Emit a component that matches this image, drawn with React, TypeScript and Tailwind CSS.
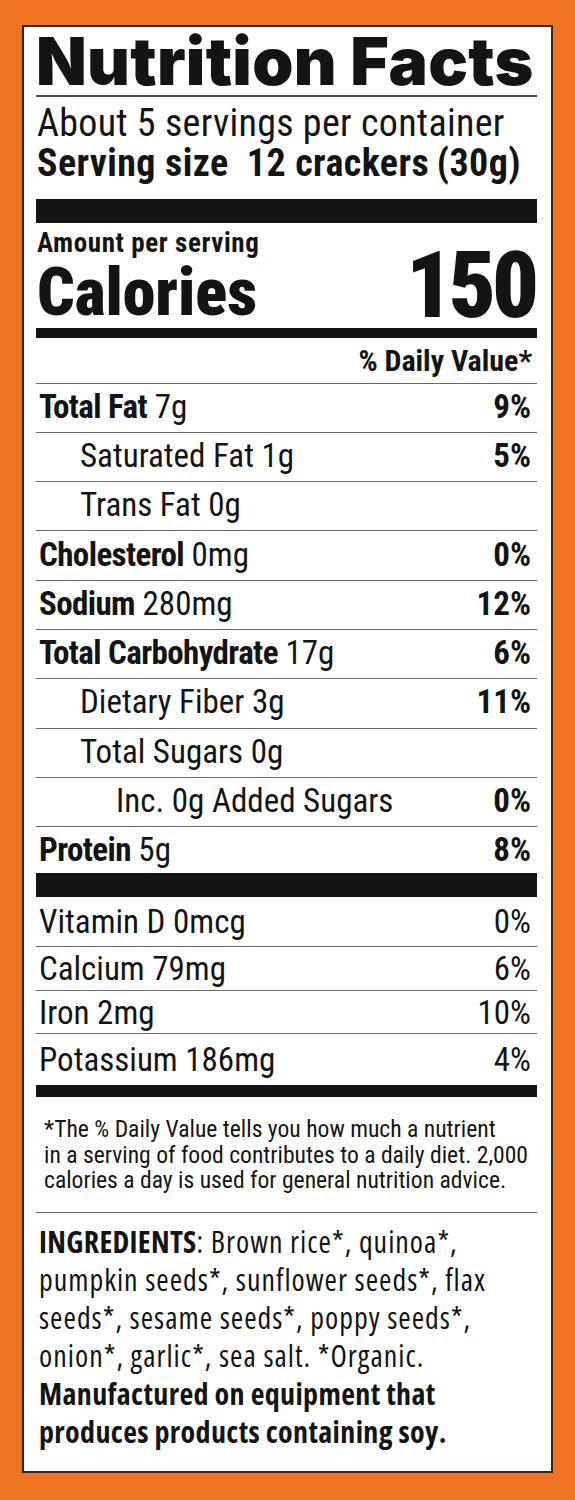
import React from "react";

type Row = {
  label: string;
  amount?: string;
  dv?: string;
  bold?: boolean;
  indent?: 0 | 1 | 2;
  dvBold?: boolean;
};

const rows: Row[] = [
  { label: "Total Fat", amount: "7g", dv: "9%", bold: true, dvBold: true },
  { label: "Saturated Fat 1g", dv: "5%", indent: 1, dvBold: true },
  { label: "Trans Fat 0g", indent: 1 },
  { label: "Cholesterol", amount: "0mg", dv: "0%", bold: true, dvBold: true },
  { label: "Sodium", amount: "280mg", dv: "12%", bold: true, dvBold: true },
  { label: "Total Carbohydrate", amount: "17g", dv: "6%", bold: true, dvBold: true },
  { label: "Dietary Fiber 3g", dv: "11%", indent: 1, dvBold: true },
  { label: "Total Sugars 0g", indent: 1 },
  { label: "Inc. 0g Added Sugars", dv: "0%", indent: 2, dvBold: true },
];

const vitamins = [
  { label: "Vitamin D 0mcg", dv: "0%", h: "h-[50px]" },
  { label: "Calcium 79mg", dv: "6%", h: "h-[44px]" },
  { label: "Iron 2mg", dv: "10%", h: "h-[43px]" },
];

function NutrientRow({ r }: { r: Row }) {
  const indentClass = r.indent === 2 ? "pl-[80px]" : r.indent === 1 ? "pl-[44px]" : "pl-[3px]";
  return (
    <div className="flex h-[49.3px] items-center justify-between border-b-[1.5px] border-[#6b6b6b] pb-[3px] text-[33px] leading-none">
      <div className={indentClass}>
        {r.bold ? (
          <>
            <span className="font-bold tracking-[-0.6px]">{r.label}</span> {r.amount}
          </>
        ) : (
          r.label
        )}
      </div>
      {r.dv ? <div className={`pr-[6px] ${r.dvBold ? "font-bold" : ""}`}>{r.dv}</div> : null}
    </div>
  );
}

export default function App() {
  return (
    <div className="min-h-[1500px] w-[575px] bg-[#ef7522] pt-[25px] pl-[22px]">
      <div className="w-[531px] border-2 border-[#3a2418] bg-white pr-[14px] pl-[12px] pb-[20px] text-[#141414] font-['Roboto_Condensed',sans-serif]">
        {/* Title */}
        <div className="h-[68px] whitespace-nowrap font-['Inter',sans-serif] text-[66px] font-black leading-[68px] tracking-[0.3px]">
          Nutrition Facts
        </div>
        <div className="h-[1.5px] bg-[#4a4a4a]" />
        <div className="pt-[6px] pl-[1px]">
          <div className="whitespace-nowrap text-[38px] leading-[40px] tracking-[0.3px]">About 5 servings per container</div>
          <div className="whitespace-nowrap text-[38px] font-bold leading-[40px] tracking-[0.4px]">
            Serving size&nbsp;&nbsp;12 crackers&thinsp;(30g)
          </div>
        </div>
        <div className="mt-[16px] h-[24px] bg-[#141414]" />

        {/* Calories */}
        <div className="flex items-end justify-between pt-[7px]">
          <div className="flex flex-col pl-[1px]">
            <div className="text-[27px] font-bold leading-[27px] tracking-[0.6px]">Amount per serving</div>
            <div className="mt-[6px] text-[66px] font-black leading-[60px]">Calories</div>
          </div>
          <div className="pr-[2px] text-[92px] font-black leading-[75px] tracking-[-4px]">150</div>
        </div>
        <div className="mt-[5px] h-[10px] bg-[#141414]" />

        <div className="flex h-[46px] items-center justify-end border-b-[1.5px] border-[#6b6b6b] pr-[5px] pt-[2px] text-[30px] font-bold leading-none">
          % Daily Value*
        </div>

        {rows.map((r) => (
          <NutrientRow key={r.label} r={r} />
        ))}

        <div className="flex h-[46px] items-center justify-between pb-[2px] text-[33px] leading-none">
          <div className="pl-[3px]">
            <span className="font-bold tracking-[-0.6px]">Protein</span> 5g
          </div>
          <div className="pr-[6px] font-bold">8%</div>
        </div>
        <div className="h-[24px] bg-[#141414]" />

        {vitamins.map((v) => (
          <div
            key={v.label}
            className={`flex ${v.h} items-center justify-between border-b-[1.5px] border-[#6b6b6b] text-[33px] leading-none`}
          >
            <div className="pl-[3px]">{v.label}</div>
            <div className="pr-[6px]">{v.dv}</div>
          </div>
        ))}
        <div className="flex h-[51px] items-center justify-between text-[33px] leading-none">
          <div className="pl-[3px]">Potassium 186mg</div>
          <div className="pr-[6px]">4%</div>
        </div>
        <div className="h-[12px] bg-[#141414]" />

        {/* Footnote */}
        <div className="pt-[20px] pb-[18px] pl-[8px] text-[23.6px] leading-[25.5px]">
          <div className="whitespace-nowrap">*The % Daily Value tells you how much a nutrient</div>
          <div className="whitespace-nowrap">in a serving of food contributes to a daily diet. 2,000</div>
          <div className="whitespace-nowrap">calories a day is used for general nutrition advice.</div>
        </div>
        <div className="h-[1.5px] bg-[#6b6b6b]" />

        {/* Ingredients */}
        <div className="pt-[10px] pl-[3px] font-['Open_Sans',sans-serif] font-stretch-condensed text-[30px] leading-[38px] tracking-[1px]">
          <div className="whitespace-nowrap">
            <span className="font-bold tracking-[0.3px]">INGREDIENTS</span>: Brown rice*, quinoa*,
          </div>
          <div className="whitespace-nowrap">pumpkin seeds*, sunflower seeds*, flax</div>
          <div className="whitespace-nowrap">seeds*, sesame seeds*, poppy seeds*,</div>
          <div className="whitespace-nowrap">onion*, garlic*, sea salt. *Organic.</div>
          <div className="whitespace-nowrap font-bold tracking-[0.35px]">Manufactured on equipment that</div>
          <div className="whitespace-nowrap font-bold tracking-[0.35px]">produces products containing soy.</div>
        </div>
      </div>
    </div>
  );
}
